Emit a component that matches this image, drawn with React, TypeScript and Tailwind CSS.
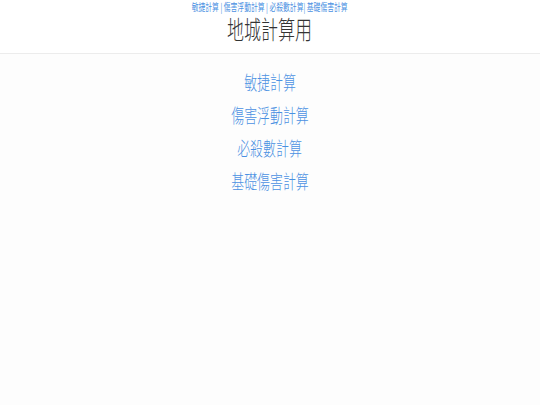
const links = ['敏捷計算', '傷害浮動計算', '必殺數計算', '基礎傷害計算'];

export default function App() {
  return (
    <div className="min-h-[405px] w-full bg-[#fdfdfd] text-[#333] [font-family:'Noto_Sans_CJK_TC','Noto_Sans_CJK_JP',sans-serif]">
      <header className="h-[54px] border-b border-[#ececec] bg-white flex flex-col items-center">
        <nav className="h-[13px] pt-[1px] flex items-center">
          <span className="inline-block origin-center scale-x-[0.68] whitespace-nowrap text-[10px] leading-[12px] text-[#4a90e2]">
            敏捷計算 | 傷害浮動計算 | 必殺數計算| 基礎傷害計算
          </span>
        </nav>
        <h1 className="mt-[2px] inline-block origin-center scale-x-[0.68] whitespace-nowrap text-[25px] leading-[26px] font-light text-[#333]">
          地城計算用
        </h1>
      </header>
      <main className="flex flex-col items-center pt-[16px] gap-[9px]">
        {links.map((l) => (
          <a
            key={l}
            href="#"
            className="inline-block origin-center scale-x-[0.68] whitespace-nowrap text-[19px] leading-[24px] font-light text-[#4a90e2]"
          >
            {l}
          </a>
        ))}
      </main>
    </div>
  );
}
